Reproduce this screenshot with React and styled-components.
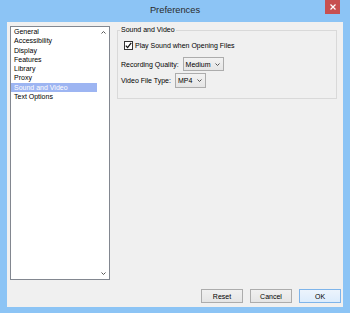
import React from "react";
import styled, { createGlobalStyle } from "styled-components";

const Global = createGlobalStyle`
  html, body { margin: 0; padding: 0; width: 350px; height: 313px; overflow: hidden; }
  body { font-family: "Liberation Sans", Arial, sans-serif; }
  * { box-sizing: border-box; }
`;

const Window = styled.div`
  width: 350px;
  height: 313px;
  background: #8cc4f5;
  display: flex;
  flex-direction: column;
`;

const TitleBar = styled.div`
  height: 22px;
  display: grid;
  grid-template-columns: 1fr auto 1fr;
  align-items: start;
`;

const Title = styled.div`
  grid-column: 2;
  font-size: 9.3px;
  line-height: 20px;
  color: #2a2a2a;
`;

const CloseButton = styled.div`
  grid-column: 3;
  justify-self: end;
  margin-right: 10px;
  width: 15px;
  height: 14px;
  background: #c75050;
  display: flex;
  align-items: center;
  justify-content: center;
`;

const Client = styled.div`
  flex: 1;
  margin: 0 7px 6px;
  background: #f0f0f0;
  padding: 4px 2px 4px 3px;
  display: flex;
  flex-direction: column;
`;

const Main = styled.div`
  flex: 1;
  display: flex;
  gap: 7px;
  margin-right: 4px;
  min-height: 0;
`;

const ListBox = styled.div`
  width: 100px;
  border: 1px solid #828790;
  background: #fff;
  display: grid;
  grid-template-columns: 86px 12px;
`;

const Items = styled.div`
  display: flex;
  flex-direction: column;
`;

const Item = styled.div`
  font-size: 7px;
  line-height: 9.3px;
  height: 9.3px;
  padding-left: 3px;
  white-space: nowrap;
  color: ${(p) => (p.$selected ? "#ffffff" : "#000000")};
  background: ${(p) => (p.$selected ? "#9db5f2" : "transparent")};
`;

const ScrollBar = styled.div`
  display: flex;
  flex-direction: column;
  justify-content: space-between;
  align-items: center;
  padding: 4px 0 4px;
`;

const GroupBox = styled.fieldset`
  flex: 1;
  align-self: flex-start;
  margin: 0;
  padding: 0 3px 10px;
  border: 1px solid #d9d9d9;
  display: flex;
  flex-direction: column;
  min-width: 0;
`;

const Legend = styled.legend`
  font-size: 7px;
  line-height: 8px;
  padding: 0 1px;
  margin-left: -1px;
  color: #000;
`;

const CheckRow = styled.label`
  display: flex;
  align-items: center;
  gap: 2px;
  height: 9px;
  margin-top: 7px;
  margin-left: 3px;
  font-size: 7px;
  color: #000;
`;

const CheckBox = styled.span`
  width: 9px;
  height: 9px;
  border: 1px solid #333;
  background: #fff;
  display: flex;
  align-items: center;
  justify-content: center;
`;

const FieldRow = styled.div`
  display: flex;
  align-items: center;
  gap: 4px;
  margin-top: ${(p) => p.$top}px;
  font-size: 7px;
  color: #000;
`;

const Select = styled.div`
  width: ${(p) => p.$width}px;
  height: ${(p) => p.$height}px;
  border: 1px solid #acacac;
  background: linear-gradient(#f2f2f2, #e5e5e5);
  display: flex;
  align-items: center;
  justify-content: space-between;
  padding: 0 3px 0 2px;
  font-size: 7px;
`;

const ButtonRow = styled.div`
  margin-top: 9px;
  display: flex;
  justify-content: flex-end;
  gap: 7px;
`;

const Button = styled.div`
  width: 42px;
  height: 14px;
  border: 1px solid ${(p) => (p.$default ? "#7eb4ea" : "#acacac")};
  background: ${(p) =>
    p.$default ? "linear-gradient(#ecf4fc, #dcecfc)" : "linear-gradient(#f0f0f0, #e5e5e5)"};
  display: flex;
  align-items: center;
  justify-content: center;
  font-size: 7px;
  color: #000;
`;

const Chevron = ({ up }) => (
  <svg width="5" height="3" viewBox="0 0 5 3">
    <path
      d={up ? "M0.5 2.5 L2.5 0.5 L4.5 2.5" : "M0.5 0.5 L2.5 2.5 L4.5 0.5"}
      fill="none"
      stroke="#555"
      strokeWidth="1"
    />
  </svg>
);

const items = [
  "General",
  "Accessibility",
  "Display",
  "Features",
  "Library",
  "Proxy",
  "Sound and Video",
  "Text Options",
];

export default function App() {
  return (
    <>
      <Global />
      <Window>
        <TitleBar>
          <Title>Preferences</Title>
          <CloseButton>
            <svg width="6" height="6" viewBox="0 0 6 6">
              <path d="M0.5 0.5 L5.5 5.5 M5.5 0.5 L0.5 5.5" stroke="#fff" strokeWidth="1.2" />
            </svg>
          </CloseButton>
        </TitleBar>
        <Client>
          <Main>
            <ListBox>
              <Items>
                {items.map((t) => (
                  <Item key={t} $selected={t === "Sound and Video"}>
                    {t}
                  </Item>
                ))}
              </Items>
              <ScrollBar>
                <Chevron up />
                <Chevron />
              </ScrollBar>
            </ListBox>
            <GroupBox>
              <Legend>Sound and Video</Legend>
              <CheckRow>
                <CheckBox>
                  <svg width="7" height="7" viewBox="0 0 7 7">
                    <path d="M0.8 3.6 L2.6 5.6 L6.2 0.9" fill="none" stroke="#111" strokeWidth="1.3" />
                  </svg>
                </CheckBox>
                Play Sound when Opening Files
              </CheckRow>
              <FieldRow $top={7}>
                Recording Quality:
                <Select $width={41} $height={14}>
                  Medium
                  <Chevron />
                </Select>
              </FieldRow>
              <FieldRow $top={2}>
                Video File Type:
                <Select $width={31} $height={15}>
                  MP4
                  <Chevron />
                </Select>
              </FieldRow>
            </GroupBox>
          </Main>
          <ButtonRow>
            <Button>Reset</Button>
            <Button>Cancel</Button>
            <Button $default>OK</Button>
          </ButtonRow>
        </Client>
      </Window>
    </>
  );
}
